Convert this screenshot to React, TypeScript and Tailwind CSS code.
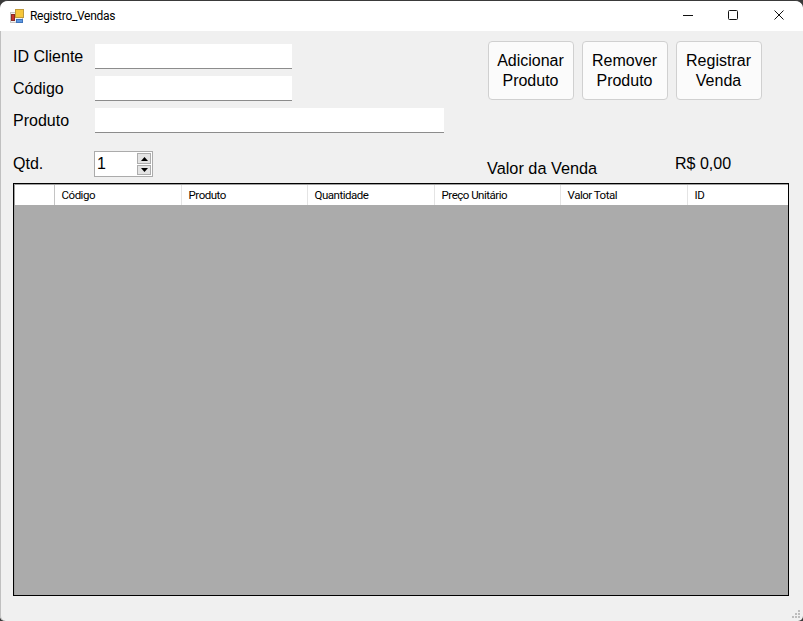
const columns = [
  { title: 'Código', width: 'w-[127px]' },
  { title: 'Produto', width: 'w-[126px]' },
  { title: 'Quantidade', width: 'w-[127px]' },
  { title: 'Preço Unitário', width: 'w-[126px]' },
  { title: 'Valor Total', width: 'w-[127px]' },
  { title: 'ID', width: 'flex-1' },
];

const buttons = [
  ['Adicionar', 'Produto'],
  ['Remover', 'Produto'],
  ['Registrar', 'Venda'],
];

function AppIcon() {
  return (
    <svg width="14" height="15" viewBox="0 0 14 15" className="shrink-0">
      <rect x="0.5" y="3.5" width="12" height="10" fill="#f1f1f1" stroke="#c4c4c4" />
      <rect x="5.5" y="0.5" width="8" height="8" fill="#f6c63a" stroke="#c09a3a" />
      <rect x="1.5" y="5.5" width="3" height="6" fill="#c8322a" stroke="#8a2a24" />
      <rect x="6.5" y="10.5" width="6" height="3" fill="#5d97e0" stroke="#3f73ba" />
    </svg>
  );
}

function TitleBar() {
  return (
    <div className="flex h-[30px] items-center bg-white pl-[10px] font-['Roboto',sans-serif] text-[12px] tracking-[-0.3px] text-black">
      <AppIcon />
      <span className="ml-[6px]">Registro_Vendas</span>
      <div className="ml-auto flex items-center pr-[1px]">
        <button className="flex h-[30px] w-[46px] items-center justify-center pb-[2px] pl-[1px]">
          <svg width="10" height="10" viewBox="0 0 10 10">
            <path d="M0 5.5H10" stroke="#111" strokeWidth="1" />
          </svg>
        </button>
        <button className="flex h-[30px] w-[46px] items-center justify-center pb-[2px]">
          <svg width="10" height="10" viewBox="0 0 10 10">
            <rect x="0.5" y="0.5" width="9" height="9" rx="1" fill="none" stroke="#111" />
          </svg>
        </button>
        <button className="flex h-[30px] w-[46px] items-center justify-center pb-[2px]">
          <svg width="10" height="10" viewBox="0 0 10 10">
            <path d="M0.5 0.5L9.5 9.5M9.5 0.5L0.5 9.5" stroke="#111" strokeWidth="1" />
          </svg>
        </button>
      </div>
    </div>
  );
}

function Field({ label, width }: { label: string; width: string }) {
  return (
    <div className="flex h-[25px] items-center">
      <span className="w-[82px]">{label}</span>
      <div className={`h-[25px] ${width} border-b border-[#8c8c8c] bg-white`} />
    </div>
  );
}

function Spinner() {
  return (
    <div className="flex h-[26px] w-[59px] items-center justify-between border border-[#ababab] bg-white pl-[2px] pr-[1px]">
      <span>1</span>
      <div className="flex flex-col gap-px">
        <div className="flex h-[11px] w-[14px] items-center justify-center border border-[#adadad] bg-[#e4e4e4]">
          <svg width="7" height="4" viewBox="0 0 7 4">
            <path d="M3.5 0L7 4H0Z" fill="#000" />
          </svg>
        </div>
        <div className="flex h-[10px] w-[14px] items-center justify-center border border-[#adadad] bg-[#e4e4e4]">
          <svg width="7" height="4" viewBox="0 0 7 4">
            <path d="M0 0H7L3.5 4Z" fill="#000" />
          </svg>
        </div>
      </div>
    </div>
  );
}

function Grid() {
  return (
    <div className="ml-[13px] mr-[14px] flex h-[413px] flex-col border border-black bg-[#ababab]">
      <div className="flex-1 border-l border-t border-[#a0a0a0]">
        <div className="flex h-[20px] bg-white font-['Roboto',sans-serif] text-[11.5px] tracking-[-0.5px] text-black">
          <div className="w-[40px] border-r border-[#c4c4c4]" />
          {columns.map((col) => (
            <div
              key={col.title}
              className={`${col.width} flex items-center border-r border-[#e4e4e4] pl-[6.6px] pt-[1px] last:border-r-0`}
            >
              {col.title}
            </div>
          ))}
        </div>
      </div>
    </div>
  );
}

function ResizeGrip() {
  return (
    <div className="flex flex-1 items-end justify-end pb-[3px] pr-[3px]">
      <svg width="8" height="8" viewBox="0 0 8 8" fill="#bdbdbd">
        <rect x="6" y="0" width="2" height="2" />
        <rect x="3" y="3" width="2" height="2" />
        <rect x="6" y="3" width="2" height="2" />
        <rect x="0" y="6" width="2" height="2" />
        <rect x="3" y="6" width="2" height="2" />
        <rect x="6" y="6" width="2" height="2" />
      </svg>
    </div>
  );
}

export default function App() {
  return (
    <div className="h-[621px] w-[803px] bg-[#3a3a3a]">
      <div className="flex h-[621px] flex-col overflow-hidden rounded-t-[8px] rounded-b-[5px] border-t border-[#3a3a3a] bg-[#f0f0f0] font-['Liberation_Sans',Arial,sans-serif] text-[16px] text-black shadow-[inset_1px_0_0_#c0c0c0]">
        <TitleBar />
        <div className="flex h-[152px]">
          <div className="w-[487px] pl-[13px] pt-[13px]">
            <div className="flex flex-col gap-[7px]">
              <Field label="ID Cliente" width="w-[197px]" />
              <Field label="Código" width="w-[197px]" />
              <Field label="Produto" width="w-[349px]" />
            </div>
            <div className="mt-[18px] flex h-[26px] items-center">
              <span className="w-[81px]">Qtd.</span>
              <Spinner />
            </div>
          </div>
          <div className="pt-[10px]">
            <div className="ml-[1px] flex gap-[8px]">
              {buttons.map((lines) => (
                <button
                  key={lines[0]}
                  className="flex h-[59px] w-[86px] flex-col items-center justify-center rounded-[4px] border border-[#d0d0d0] bg-[#fbfbfb] pr-[1px] leading-[20px]"
                >
                  <span>{lines[0]}</span>
                  <span>{lines[1]}</span>
                </button>
              ))}
            </div>
            <div className="mt-[52px] flex">
              <span className="mt-[4px] w-[188px] text-[16.3px]">Valor da Venda</span>
              <span>R$ 0,00</span>
            </div>
          </div>
        </div>
        <Grid />
        <ResizeGrip />
      </div>
    </div>
  );
}
